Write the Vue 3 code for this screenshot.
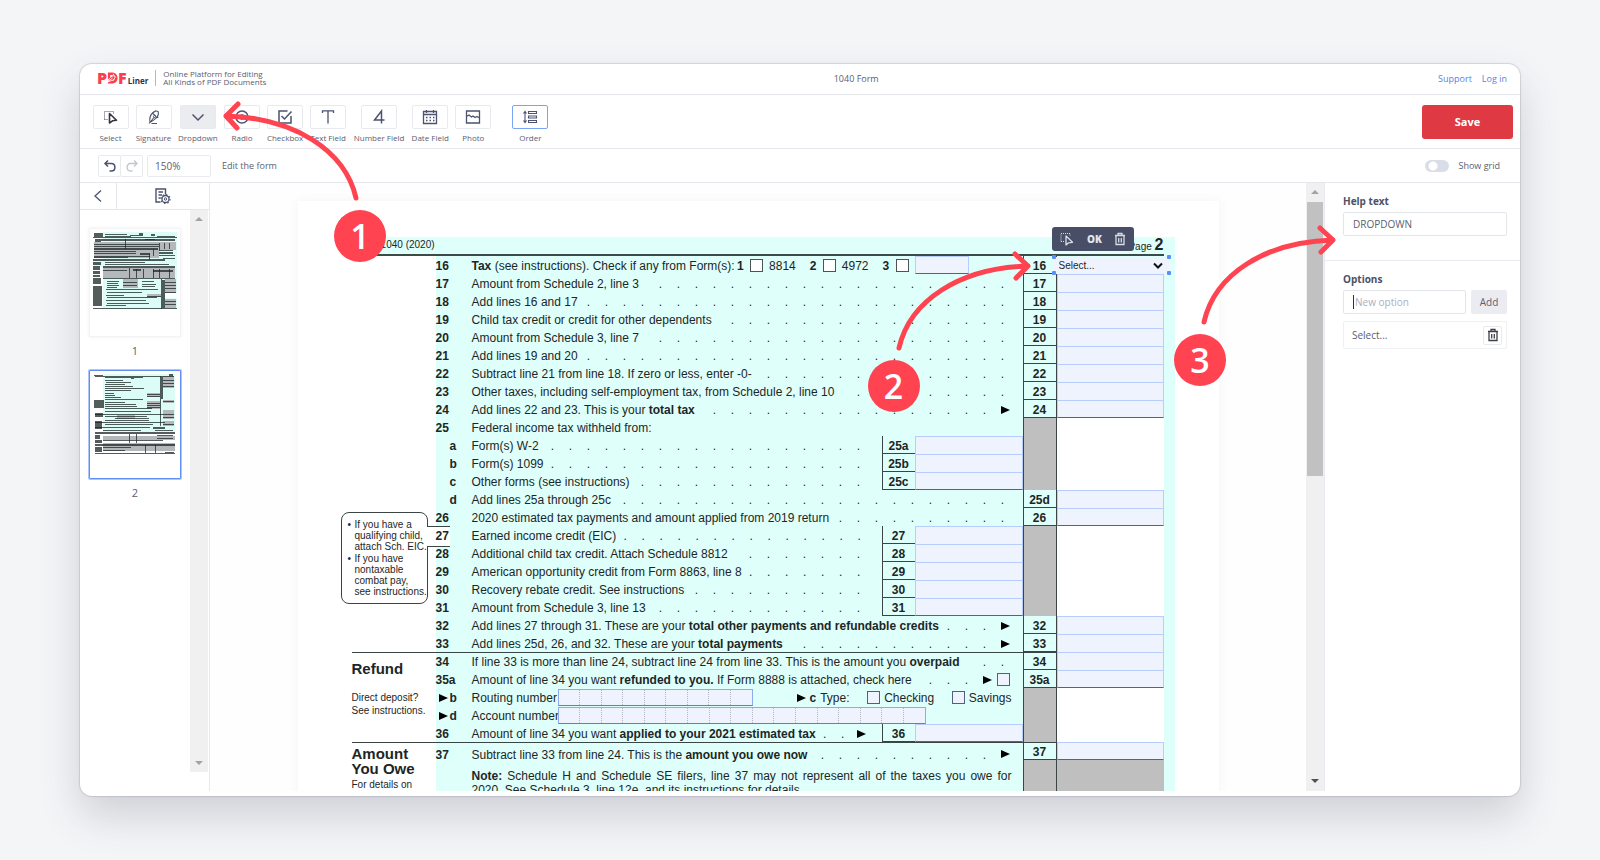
<script setup>
import { ref } from 'vue'

const tools = [
  { id: 'select', label: 'Select' },
  { id: 'sign', label: 'Signature' },
  { id: 'drop', label: 'Dropdown' },
  { id: 'radio', label: 'Radio' },
  { id: 'check', label: 'Checkbox' },
  { id: 'text', label: 'Text Field' },
  { id: 'number', label: 'Number Field' },
  { id: 'date', label: 'Date Field' },
  { id: 'photo', label: 'Photo' },
  { id: 'order', label: 'Order' },
]

const zoom = ref('150%')
const showGrid = ref(false)
const helpText = ref('DROPDOWN')
const newOption = ref('')

// Row text: plain parts at even positions, bold parts at odd positions.
const groups = [
  {
    id: 'payments',
    rows: [
      { no: '16', kind: 'tax', box: '16' },
      { no: '17', text: ['Amount from Schedule 2, line 3'], dots: 20, box: '17' },
      { no: '18', text: ['Add lines 16 and 17'], dots: 24, box: '18' },
      { no: '19', text: ['Child tax credit or credit for other dependents'], dots: 16, box: '19' },
      { no: '20', text: ['Amount from Schedule 3, line 7'], dots: 20, box: '20' },
      { no: '21', text: ['Add lines 19 and 20'], dots: 24, box: '21' },
      { no: '22', text: ['Subtract line 21 from line 18. If zero or less, enter -0-'], dots: 14, box: '22' },
      { no: '23', text: ['Other taxes, including self-employment tax, from Schedule 2, line 10'], dots: 9, box: '23' },
      { no: '24', text: ['Add lines 22 and 23. This is your ', 'total tax'], dots: 16, arrow: true, box: '24', last: true },
      { no: '25', text: ['Federal income tax withheld from:'] },
      { no: 'a', sub: true, text: ['Form(s) W-2'], dots: 18, mini: '25a' },
      { no: 'b', sub: true, text: ['Form(s) 1099'], dots: 18, mini: '25b' },
      { no: 'c', sub: true, text: ['Other forms (see instructions)'], dots: 13, mini: '25c', last: true },
      { no: 'd', sub: true, text: ['Add lines 25a through 25c'], dots: 22, box: '25d' },
      { no: '26', text: ['2020 estimated tax payments and amount applied from 2019 return'], dots: 10, box: '26', last: true },
      { no: '27', notch: true, text: ['Earned income credit (EIC)'], dots: 14, mini: '27' },
      { no: '28', text: ['Additional child tax credit. Attach Schedule 8812'], dots: 7, mini: '28' },
      { no: '29', text: ['American opportunity credit from Form 8863, line 8'], dots: 7, mini: '29' },
      { no: '30', text: ['Recovery rebate credit. See instructions'], dots: 10, mini: '30' },
      { no: '31', text: ['Amount from Schedule 3, line 13'], dots: 12, mini: '31', last: true },
      { no: '32', text: ['Add lines 27 through 31. These are your ', 'total other payments and refundable credits'], dots: 3, arrow: true, box: '32' },
      { no: '33', text: ['Add lines 25d, 26, and 32. These are your ', 'total payments'], dots: 11, arrow: true, box: '33' },
    ],
  },
  {
    id: 'refund',
    rows: [
      { no: '34', text: ['If line 33 is more than line 24, subtract line 24 from line 33. This is the amount you ', 'overpaid'], dots: 2, box: '34' },
      { no: '35a', text: ['Amount of line 34 you want ', 'refunded to you.', ' If Form 8888 is attached, check here'], dots: 3, arrow: true, check: true, box: '35a', last: true },
      { no: 'b', sub: true, point: true, kind: 'routing' },
      { no: 'd', sub: true, point: true, kind: 'account' },
      { no: '36', text: ['Amount of line 34 you want ', 'applied to your 2021 estimated tax'], dots: 2, arrow: true, mini: '36', last: true },
    ],
  },
  {
    id: 'owe',
    rows: [
      { no: '37', text: ['Subtract line 33 from line 24. This is the ', 'amount you owe now'], dots: 10, arrow: true, box: '37', last: true },
      { no: '', kind: 'note', dark: true },
    ],
  },
]

// Thumbnail drawings: [x, y, width, height] per tone.
const thumbs = [
  {
    page: 1,
    mint: [[10, 0, 74, 61], [0, 27, 10, 8], [10, 61, 62, 16], [72, 66, 12, 11]],
    grey: [[1, 10, 65, 16], [66, 10, 17, 8], [10, 36, 72, 10], [30, 47, 15, 9], [72, 47, 11, 14], [72, 67, 11, 9], [54, 62, 14, 3]],
    ink: [
      [1, 1, 9, 4], [12, 2, 22, 1], [12, 4, 26, 1], [37, 3, 9, 1], [46, 1, 4, 3], [58, 2, 4, 2], [0, 5, 84, 1], [64, 4, 18, 1],
      [2, 7, 80, 2], [2, 9, 6, 1], [32, 7, 1, 10], [52, 7, 10, 1], [1, 12, 65, 1], [1, 14, 65, 1], [1, 16, 64, 2], [66, 11, 1, 8], [71, 11, 1, 6], [76, 11, 1, 6],
      [1, 19, 42, 1], [1, 21, 42, 1], [47, 21, 10, 2], [1, 24, 34, 2], [60, 17, 1, 7], [35, 24, 22, 1], [66, 18, 14, 1], [66, 20, 14, 2], [66, 23, 16, 1], [56, 22, 1, 6],
      [0, 27, 72, 2], [70, 26, 12, 1], [0, 30, 8, 3], [12, 30, 40, 1], [12, 32, 64, 1], [0, 34, 7, 4], [10, 34, 72, 2], [0, 39, 7, 3],
      [10, 38, 24, 1], [40, 37, 8, 2], [60, 38, 20, 2], [36, 36, 1, 10], [43, 37, 1, 9], [50, 37, 1, 9], [60, 37, 1, 9], [66, 37, 1, 9], [76, 37, 1, 9],
      [0, 43, 7, 2], [0, 46, 8, 6], [10, 46, 72, 1], [0, 54, 9, 20], [14, 49, 12, 1], [14, 51, 11, 1], [14, 53, 12, 1], [14, 55, 10, 1], [30, 50, 14, 1], [30, 53, 14, 1],
      [49, 49, 12, 1], [49, 52, 14, 1], [49, 54, 13, 1], [13, 57, 52, 1], [14, 60, 35, 1], [13, 63, 18, 1], [14, 65, 50, 1], [13, 68, 40, 1], [14, 71, 42, 1], [13, 73, 20, 1],
      [54, 64, 14, 1], [68, 47, 1, 30], [69, 48, 3, 28], [72, 50, 11, 1], [72, 53, 11, 1], [72, 56, 11, 1], [72, 60, 11, 1], [72, 69, 11, 1], [72, 72, 11, 1], [0, 76, 84, 1],
    ],
  },
  {
    page: 2,
    mint: [[10, 0, 72, 58]],
    grey: [[70, 2, 11, 12], [54, 19, 13, 4], [54, 27, 13, 8], [70, 26, 11, 3], [70, 36, 11, 9], [70, 47, 11, 5], [24, 41, 18, 4], [10, 62, 72, 4], [10, 69, 72, 8]],
    ink: [
      [1, 1, 9, 1], [76, 0, 4, 2], [2, 2, 79, 1], [12, 3, 38, 1], [38, 4, 3, 1], [12, 6, 18, 1], [13, 8, 25, 1], [12, 10, 20, 1], [12, 12, 28, 1],
      [12, 14, 39, 1], [12, 16, 26, 1], [12, 19, 9, 1], [12, 21, 10, 1], [12, 23, 16, 1], [12, 25, 38, 1], [12, 28, 20, 1], [12, 30, 31, 1],
      [12, 32, 32, 1], [12, 34, 47, 1], [12, 37, 46, 1], [2, 40, 68, 1], [12, 42, 42, 1], [22, 44, 34, 1], [12, 46, 44, 1], [2, 48, 70, 1],
      [12, 50, 48, 1], [1, 26, 10, 8], [2, 39, 8, 4], [2, 47, 7, 8], [54, 20, 13, 1], [54, 22, 13, 1], [54, 29, 13, 1], [54, 31, 13, 1], [54, 33, 13, 1],
      [67, 2, 1, 50], [68, 3, 2, 22], [70, 6, 11, 1], [70, 9, 11, 1], [70, 12, 11, 1], [70, 27, 11, 1], [70, 40, 11, 1], [70, 43, 11, 1], [70, 50, 11, 1],
      [2, 53, 55, 1], [60, 53, 12, 2], [10, 56, 38, 1], [62, 56, 18, 1], [2, 58, 80, 2], [2, 61, 5, 4], [2, 66, 7, 3], [36, 60, 1, 9], [43, 60, 1, 9], [10, 66, 60, 1],
      [64, 61, 16, 1], [64, 64, 16, 1], [2, 70, 80, 2], [2, 73, 7, 5], [10, 73, 28, 1], [10, 76, 22, 1], [52, 71, 1, 8], [62, 71, 1, 8], [2, 79, 80, 1], [72, 78, 9, 1],
    ],
  },
]
</script>

<template>
  <div class="page">
    <main class="window">
      <header class="brand-bar">
        <a class="logo" href="#" aria-label="PDFLiner">
          <span class="logo-pdf">P</span>
          <svg class="logo-d" viewBox="0 0 12 12" aria-hidden="true">
            <path d="M1 0H5C9 0 11.500 2.400 11.500 6S9 12 5 12H1V10.500L5 9.400C7.500 9.200 8.500 8 8.500 6S7.300 2.800 5 2.700H3.500V5.500L1 7.500Z" />
            <path d="M1.500 9.500C2.500 7 4 4.800 7 3.800L8.200 5.500C7.500 7.800 5 8.800 1.500 9.500Z" />
            <path class="cut" d="M1.500 9.600 6 6M6.500 1.500 9.500 5.500" />
          </svg>
          <span class="logo-pdf">F</span>
          <span class="logo-liner">Liner</span>
        </a>
        <p class="tagline">Online Platform for Editing<br />All Kinds of PDF Documents</p>
        <h1 class="doc-title">1040 Form</h1>
        <nav class="links">
          <a href="#">Support</a>
          <a href="#">Log in</a>
        </nav>
      </header>

      <section class="tool-bar">
        <div v-for="t in tools" :key="t.id" class="tool" :class="t.id">
          <button :id="'tool-' + t.id" class="tool-btn" type="button" :aria-labelledby="'label-' + t.id">
            <svg v-if="t.id === 'select'" width="16" height="16" viewBox="0 0 16 16">
              <path d="M1.500 10.500V2.500H10.500V5M1.500 10.500H5" stroke-dasharray="1 1" stroke-width="1" />
              <path d="M6.500 4.500V14L9.500 11.800 13.500 11.300Z" stroke="#33353f" stroke-width="1.600" stroke-linejoin="round" />
            </svg>
            <svg v-else-if="t.id === 'sign'" width="16" height="16" viewBox="0 0 16 16">
              <path d="M3 14.500 8 8.500M4 13.300C3.400 10 4 6.500 6.500 4L10 7.500M6.500 4C8 2.300 10 1.500 12 2.500 13 4.500 12 7 10 9 8 11.500 6 12.300 4 13.300M6.500 4 10 1.800M10 9 12.500 8M5.500 14.500H11" stroke-width="1.100" />
              <circle cx="8.500" cy="7.500" r="1" stroke-width="1" />
            </svg>
            <svg v-else-if="t.id === 'drop'" width="16" height="16" viewBox="0 0 16 16"><path d="M2.500 5.500 8 11 13.500 5.500" stroke-width="1.500" /></svg>
            <svg v-else-if="t.id === 'radio'" width="16" height="16" viewBox="0 0 16 16"><circle cx="8" cy="8" r="6" stroke-width="1.500" /><circle cx="8" cy="8" r="2" stroke-width="1.500" /></svg>
            <svg v-else-if="t.id === 'check'" width="16" height="16" viewBox="0 0 16 16"><path d="M10.500 2H2V14H14V7M4.500 7 7.500 10 14.500 2.500" stroke-width="1.500" /></svg>
            <svg v-else-if="t.id === 'text'" width="16" height="16" viewBox="0 0 16 16"><path d="M2.500 4V1.800H13.500V4M8 1.800V14.500" stroke-width="1.300" /></svg>
            <svg v-else-if="t.id === 'number'" width="16" height="16" viewBox="0 0 16 16"><path d="M10.500 14.500V2L3.500 11H13.500" stroke-width="1.500" /></svg>
            <svg v-else-if="t.id === 'date'" width="16" height="16" viewBox="0 0 16 16"><path d="M1.500 2.500H14.500V14.500H1.500ZM1.500 5.500H14.500M4.500 1V4M11.500 1V4" stroke-width="1.300" /><path d="M4 8.500H13M4 11.500H13" stroke-width="1.500" stroke-dasharray="1.500 2" /></svg>
            <svg v-else-if="t.id === 'photo'" width="16" height="16" viewBox="0 0 16 16"><path d="M1.500 2H14.500V14H1.500ZM1.500 7.500 4 6 6.500 8 8 7 10 8.500 12 7.500 14.500 9" stroke-width="1.300" /></svg>
            <svg v-else width="16" height="16" viewBox="0 0 16 16"><path d="M3 3V13M1.500 4.500 3 2.500 4.500 4.500M1.500 11.500 3 13.500 4.500 11.500M6.500 2.500H14.500V4.500H6.500ZM6.500 7H14.500V9H6.500ZM6.500 11.500H14.500V13.500H6.500Z" stroke-width="1.100" /></svg>
          </button>
          <label :id="'label-' + t.id" :for="'tool-' + t.id">{{ t.label }}</label>
        </div>
        <button class="save" type="button">Save</button>
      </section>

      <section class="sub-bar">
        <div class="history">
          <button type="button" aria-label="Undo">
            <svg width="14" height="14" viewBox="0 0 14 14"><path d="M5 1.500 2 4.500 5 7.500M2 4.500H8.500C13 4.500 13 12 8.500 12H6.500" stroke-width="1.500" /></svg>
          </button>
          <button type="button" aria-label="Redo" disabled>
            <svg width="14" height="14" viewBox="0 0 14 14"><path d="M9 1.500 12 4.500 9 7.500M12 4.500H5.500C1 4.500 1 12 5.500 12H7.500" stroke-width="1.300" /></svg>
          </button>
        </div>
        <input v-model="zoom" class="zoom" type="text" aria-label="Zoom" />
        <span class="hint">Edit the form</span>
        <label class="grid-switch"><input v-model="showGrid" type="checkbox" />Show grid</label>
      </section>

      <section class="workspace">
        <aside class="pages">
          <div class="pages-head">
            <button class="back" type="button" aria-label="Back">
              <svg width="10" height="14" viewBox="0 0 10 14"><path d="M8 1.500 2 7 8 12.500" stroke-width="1.300" /></svg>
            </button>
            <button class="setup" type="button" aria-label="Page settings">
              <svg width="18" height="18" viewBox="0 0 18 18">
                <path d="M6.500 15H2V2H11.500V7.500M4.500 5H9M4.500 8H8M4.500 11H6.500" stroke-width="1.400" />
                <circle cx="11.500" cy="12" r="3.500" stroke-width="1.300" /><circle cx="11.500" cy="12" r="1.200" stroke-width="1" />
                <circle cx="11.500" cy="12" r="4.500" stroke-width="1.200" stroke-dasharray="1.500 2" />
              </svg>
            </button>
          </div>
          <div class="pages-list">
            <div class="thumbs">
              <figure v-for="p in thumbs" :key="p.page">
                <button class="thumb" :class="{ current: p.page === 2 }" type="button" :aria-label="'Page ' + p.page">
                  <svg viewBox="0 0 84 80" aria-hidden="true">
                    <rect v-for="(r, i) in p.mint" :key="'m' + i" :x="r[0]" :y="r[1]" :width="r[2]" :height="r[3]" fill="#dcfdf7" />
                    <rect v-for="(r, i) in p.grey" :key="'g' + i" :x="r[0]" :y="r[1]" :width="r[2]" :height="r[3]" fill="#b4b8ba" />
                    <rect v-for="(r, i) in p.ink" :key="'k' + i" :x="r[0]" :y="r[1]" :width="r[2]" :height="r[3]" fill="#1c2626" fill-opacity="0.75" />
                  </svg>
                </button>
                <figcaption>{{ p.page }}</figcaption>
              </figure>
            </div>
            <div class="scroll"><i class="up"></i><i class="down"></i></div>
          </div>
        </aside>

        <div class="canvas">
          <article class="sheet">
            <header class="form-head">
              <span>Form 1040 (2020)</span>
              <span>Page <b>2</b></span>
            </header>

            <section v-for="g in groups" :key="g.id" class="group" :class="g.id">
              <div class="margin">
                <ul v-if="g.id === 'payments'" class="notes">
                  <li>If you have a<br />qualifying child,<br />attach Sch. EIC.</li>
                  <li>If you have<br />nontaxable<br />combat pay,<br />see instructions.</li>
                </ul>
                <template v-else-if="g.id === 'refund'">
                  <h2>Refund</h2>
                  <p>Direct deposit?<br />See instructions.</p>
                </template>
                <template v-else>
                  <h2>Amount You Owe</h2>
                  <p>For details on</p>
                </template>
              </div>

              <div class="rows">
                <div v-for="r in g.rows" :key="r.no" class="row" :class="[r.kind, { last: r.last, dark: r.dark }]">
                  <div class="no" :class="{ sub: r.sub, notch: r.notch }"><i v-if="r.point" class="tri"></i><b>{{ r.no }}</b></div>

                  <div class="main" :class="{ split: r.mini }">
                    <template v-if="r.kind === 'tax'">
                      <span><b>Tax</b> (see instructions). Check if any from Form(s):</span>
                      <label class="form-no"><b>1</b><input type="checkbox" />8814</label>
                      <label class="form-no"><b>2</b><input type="checkbox" />4972</label>
                      <label class="form-no"><b>3</b><input type="checkbox" /></label>
                      <input class="field other" type="text" aria-label="Other form" />
                    </template>
                    <template v-else-if="r.kind === 'routing'">
                      <label class="comb-label" for="routing">Routing number</label>
                      <span class="comb nine"><i v-for="n in 9" :key="n"></i><input id="routing" type="text" /></span>
                      <span class="type"><i class="tri"></i><b>c</b> Type:</span>
                      <label class="kind-box"><input type="checkbox" />Checking</label>
                      <label class="kind-box"><input type="checkbox" />Savings</label>
                    </template>
                    <template v-else-if="r.kind === 'account'">
                      <label class="comb-label" for="account">Account number</label>
                      <span class="comb seventeen"><i v-for="n in 17" :key="n"></i><input id="account" type="text" /></span>
                    </template>
                    <p v-else-if="r.kind === 'note'" class="note-text">
                      <b>Note:</b> Schedule H and Schedule SE filers, line 37 may not represent all of the taxes you owe for 2020. See Schedule 3, line 12e, and its instructions for details.
                    </p>
                    <template v-else>
                      <span class="text"><component :is="i % 2 ? 'b' : 'span'" v-for="(t, i) in r.text" :key="i">{{ t }}</component></span>
                      <span class="dots" aria-hidden="true"><i v-for="n in r.dots || 0" :key="n">.</i></span>
                      <span v-if="r.arrow" class="arrow"><i class="tri"></i></span>
                      <input v-if="r.check" type="checkbox" class="here" aria-label="Form 8888 attached" />
                    </template>
                  </div>

                  <template v-if="r.mini">
                    <div class="mini-no">{{ r.mini }}</div>
                    <input class="field" type="text" :aria-label="'Line ' + r.mini" />
                  </template>

                  <div class="box-no" :class="{ grey: !r.box }">{{ r.box }}</div>
                  <input v-if="r.box && r.kind !== 'tax'" class="field value" type="text" :aria-label="'Line ' + r.box" />
                  <div v-else-if="r.kind === 'tax'" class="value picked">
                    <select aria-label="Line 16"><option>Select...</option></select>
                    <svg class="chev" width="10" height="8" viewBox="0 0 10 8"><path d="M1 1.500 5 5.500 9 1.500" stroke-width="2" /></svg>
                    <i class="knob a"></i><i class="knob b"></i><i class="knob c"></i><i class="knob d"></i>
                    <div class="popup">
                      <button type="button" aria-label="Select">
                        <svg width="16" height="16" viewBox="0 0 16 16">
                          <path d="M2 10.500V2.500H11V5M2 10.500H5" stroke-dasharray="1 1" stroke-width="1" />
                          <path d="M7 5V14L9.500 11.800 13.500 11.300Z" stroke-width="1.300" stroke-linejoin="round" />
                        </svg>
                      </button>
                      <button type="button">OK</button>
                      <button type="button" aria-label="Delete">
                        <svg width="12" height="14" viewBox="0 0 12 14"><path d="M1 3.500H11M4 3V1.500H8V3M2 4V12.500H10V4M4.700 6V10.500M7.300 6V10.500" stroke-width="1.300" /></svg>
                      </button>
                    </div>
                  </div>
                  <div v-else class="value blank"></div>
                </div>
              </div>
            </section>

            <div class="callout two">
              <svg width="140" height="106" viewBox="0 0 140 106"><path d="M7 100C18 52 68 20 136 18M123 6 136 18 124 30" /></svg>
              <span>2</span>
            </div>
          </article>
        </div>
        <div class="scroll main-scroll"><i class="up"></i><div class="bar"></div><i class="down"></i></div>

        <aside class="props">
          <div class="prop-block">
            <label for="help">Help text</label>
            <input id="help" v-model="helpText" type="text" />
          </div>
          <div class="prop-block">
            <label for="option">Options</label>
            <div class="add-row">
              <div class="caret-box"><input id="option" v-model="newOption" type="text" placeholder="New option" /></div>
              <button class="add" type="button">Add</button>
            </div>
            <div class="option">
              <span>Select...</span>
              <button type="button" aria-label="Delete option">
                <svg width="12" height="14" viewBox="0 0 12 14"><path d="M1 3.500H11M4 3V1.500H8V3M2 4V12.500H10V4M4.700 6V10.500M7.300 6V10.500" stroke-width="1.300" /></svg>
              </button>
            </div>
          </div>
        </aside>
      </section>

      <div class="callout one">
        <svg width="144" height="106" viewBox="0 0 144 106"><path d="M137 99C126 51 75 19 7 17M19 5 7 17 18 29" /></svg>
        <span>1</span>
      </div>
      <div class="callout three">
        <svg width="140" height="106" viewBox="0 0 140 106"><path d="M7 100C18 52 68 20 136 18M123 6 136 18 124 30" /></svg>
        <span>3</span>
      </div>
    </main>
  </div>
</template>

<style>
html,
body {
  background: #f4f5f7;
}
</style>

<style scoped>
* {
  box-sizing: border-box;
}
.page {
  height: 100vh;
  min-height: 600px;
  padding: 64px 80px;
  background: #f4f5f7;
  font-family: 'Open Sans', sans-serif;
  font-size: 9px;
  color: #5a6072;
}
button,
input,
select {
  margin: 0;
  padding: 0;
  font: inherit;
  color: inherit;
}
button {
  display: flex;
  align-items: center;
  justify-content: center;
  background: #fff;
  border: 1px solid #e9eaef;
}
svg {
  display: block;
  fill: none;
  stroke: #4c5270;
}
h1,
h2,
p,
ul,
figure {
  margin: 0;
  padding: 0;
}
a {
  text-decoration: none;
}
.window {
  position: relative;
  display: flex;
  flex-direction: column;
  height: 100%;
  padding-bottom: 5px;
  background: #fff;
  border-radius: 12px;
  box-shadow: 0 0 1px 1px rgba(120, 125, 140, 0.25), 0 20px 40px rgba(60, 65, 85, 0.2);
}

/* brand bar */
.brand-bar {
  display: flex;
  align-items: center;
  height: 31px;
  padding: 0 13px 2px 17px;
  border-bottom: 1px solid #e6e7ed;
}
.logo {
  display: flex;
  align-items: baseline;
}
.logo-pdf {
  font-size: 16px;
  line-height: 16px;
  font-weight: 800;
  color: #fb3d4e;
}
.logo-d {
  width: 11px;
  height: 12px;
  fill: #fb3d4e;
  stroke: none;
}
.logo-d .cut {
  fill: none;
  stroke: #fff;
  stroke-width: 1;
}
.logo-liner {
  margin-left: 1px;
  font-size: 8px;
  font-weight: 700;
  color: #2c3152;
}
.tagline {
  margin-left: 7px;
  padding-left: 7px;
  border-left: 1px solid #b5b8c2;
  font-size: 8px;
  line-height: 8px;
}
.doc-title {
  flex: 1;
  padding-left: 8px;
  font-size: 9px;
  font-weight: 400;
  text-align: center;
}
.links {
  display: flex;
  gap: 10px;
}
.links a {
  color: #5b7fe0;
}

/* tool bar */
.tool-bar {
  display: flex;
  align-items: flex-start;
  gap: 6px;
  height: 54px;
  padding: 10px 7px 0 12px;
  border-bottom: 1px solid #e6e7ed;
}
.tool {
  display: flex;
  flex-direction: column;
  align-items: center;
  gap: 3px;
  min-width: 37px;
}
.tool.number {
  min-width: 53px;
}
.tool label {
  font-size: 8px;
  line-height: 12px;
  white-space: nowrap;
}
.tool-btn {
  width: 36px;
  height: 24px;
  border-radius: 2px;
}
.drop .tool-btn {
  background: #ebecf0;
}
.order {
  margin-left: 14px;
}
.order .tool-btn {
  border-color: #7ba3f7;
}
.save {
  width: 91px;
  height: 34px;
  margin-left: auto;
  padding-bottom: 1px;
  border: 0;
  border-radius: 3px;
  background: #df3944;
  color: #fff;
  font-size: 11px;
  font-weight: 700;
}

/* sub bar */
.sub-bar {
  display: flex;
  align-items: center;
  height: 34px;
  padding: 0 20px 0 18px;
  border-bottom: 1px solid #e6e7ed;
}
.history {
  display: flex;
}
.history button {
  width: 23px;
  height: 22px;
  border-radius: 2px;
}
.history button + button {
  margin-left: -1px;
}
.history button:disabled svg {
  stroke: #c3c6d0;
}
.zoom {
  width: 64px;
  height: 22px;
  margin-left: 4px;
  padding-left: 7px;
  border: 1px solid #e9eaef;
  border-radius: 2px;
  font-size: 10px;
}
.hint {
  margin-left: 11px;
}
.grid-switch {
  display: flex;
  align-items: center;
  gap: 9px;
  margin-left: auto;
}
.grid-switch input {
  appearance: none;
  width: 24px;
  height: 12px;
  border-radius: 6px;
  background: radial-gradient(circle at 8px 6px, #fff 4px, #d9dde8 5px);
}

/* page list */
.workspace {
  display: flex;
  flex: 1;
  min-height: 0;
}
.pages {
  display: flex;
  flex-direction: column;
  width: 130px;
  flex: none;
  padding-bottom: 19px;
  border-right: 1px solid #e9eaef;
}
.pages-head {
  display: flex;
  height: 27px;
  border-bottom: 1px solid #e6e7ed;
}
.pages-head button {
  border: 0;
}
.pages-head .back {
  width: 37px;
  border-right: 1px solid #e6e7ed;
}
.pages-head .setup {
  flex: 1;
}
.pages-list {
  display: flex;
  flex: 1;
  min-height: 0;
  padding-right: 1px;
}
.thumbs {
  flex: 1;
  padding: 18px 9px 0;
}
.thumbs figcaption {
  height: 33px;
  font-size: 11px;
  line-height: 28px;
  text-align: center;
}
.thumb {
  align-items: flex-start;
  width: 100%;
  height: 109px;
  padding: 3px 0;
  border: 1px solid #f3f3f6;
  box-shadow: 0 0 3px rgba(60, 60, 80, 0.08);
}
.thumb svg {
  width: 84px;
  height: 80px;
  stroke: none;
}
.thumb.current {
  border: 1px solid #5e8ff5;
  border-radius: 1px;
  box-shadow: 0 0 0 1px rgba(94, 143, 245, 0.5);
}
.scroll {
  display: flex;
  flex-direction: column;
  align-items: center;
  flex: none;
  width: 18px;
  padding: 7px 0;
  background: #f0f0f0;
}
.scroll .down {
  margin-top: auto;
}
.up,
.down {
  width: 0;
  border: 4px solid transparent;
}
.up {
  border-top: 0;
  border-bottom: 4px solid #a3a3a3;
}
.down {
  border-bottom: 0;
  border-top: 4px solid #a3a3a3;
}
.main-scroll {
  padding: 7px 0 8px;
}
.main-scroll .bar {
  width: 16px;
  height: 274px;
  margin-top: 8px;
  background: #c1c1c1;
}
.main-scroll .down {
  border-top-color: #505050;
}

/* sheet */
.canvas {
  flex: 1;
  min-width: 0;
  padding-top: 18px;
  overflow: hidden;
  background: #fefefe;
}
.sheet {
  position: relative;
  width: 921px;
  margin: 0 auto;
  padding: 36px 44px 0 54px;
  background: #fff;
  box-shadow: 0 0 10px rgba(50, 60, 100, 0.06);
  font-family: 'Liberation Sans', Arial, sans-serif;
  font-size: 12px;
  line-height: 18px;
  color: #1d2626;
}
.form-head {
  display: flex;
  justify-content: space-between;
  height: 19px;
  padding: 0 11px 0 3px;
  font-size: 10px;
  line-height: 16px;
  background: linear-gradient(#3c4a48, #3c4a48) left bottom / calc(100% - 11px) 2px no-repeat, #dffffa;
}
.form-head b {
  font-size: 16px;
}
.group {
  display: flex;
}
.margin {
  width: 84px;
  flex: none;
}
.refund .margin,
.owe .margin,
.refund .row:first-child > :nth-child(-n + 3),
.owe .row:first-child > :nth-child(-n + 3) {
  box-shadow: inset 0 1px #3b4545;
}
.rows {
  flex: 1;
  min-width: 0;
  padding-right: 11px;
  background: #dffffa;
}
.row {
  display: flex;
  height: 18px;
}
.no {
  position: relative;
  width: 36px;
  flex: none;
  padding-top: 1px;
}
.no.sub {
  padding-left: 14px;
}
.no .tri {
  position: absolute;
  left: 3px;
  top: 6px;
}
.notch::before {
  content: '';
  position: absolute;
  top: 0;
  left: -9px;
  width: 23px;
  height: 19px;
  background: #fff;
  border: 1px solid #3b4545;
  border-width: 1px 0;
}
.notch b {
  position: relative;
}
.tri {
  display: block;
  border: 4px solid transparent;
  border-left: 9px solid #000;
  border-right: 0;
}
.main {
  display: flex;
  flex: 1;
  min-width: 0;
  padding: 1px 11px 0 0;
  white-space: nowrap;
}
.main.split {
  padding-right: 14px;
}
.text {
  white-space: pre;
}
.dots {
  display: flex;
  margin-left: auto;
}
.dots i {
  width: 18px;
  font-style: normal;
  text-align: center;
}
.arrow {
  display: flex;
  align-items: center;
  justify-content: flex-end;
  width: 18px;
  padding-right: 2px;
}
.main input[type='checkbox'] {
  appearance: none;
  width: 13px;
  height: 13px;
  border: 1px solid #53607a;
  background: #eff3fe;
}
.main .here {
  margin: 2px 2px 0 3px;
}
.mini-no,
.box-no {
  flex: none;
  width: 34px;
  padding-top: 1px;
  border: 1px solid #3b4545;
  border-width: 0 1px 1px;
  font-weight: 700;
  text-align: center;
}
.mini-no {
  width: 33px;
  border-right: 0;
}
.box-no.grey {
  border-bottom: 0;
  background: #bfbfbf;
}
.field {
  width: 108px;
  flex: none;
  border: 1px solid #b7cdfb;
  border-bottom: 0;
  border-radius: 0;
  background: #eff3fe;
}
.value {
  width: 107px;
  flex: none;
}
.field.value {
  width: 107px;
}
.row.last .field {
  border-bottom: 1px solid #56637c;
}
.blank {
  background: #fff;
}
.dark {
  height: 50px;
}
.dark .blank {
  background: #bfbfbf;
}

/* line 16 */
.form-no {
  display: flex;
}
.row.tax .form-no {
  margin-left: 14px;
}
.row.tax .form-no:first-of-type {
  margin-left: auto;
}
.row.tax .form-no b {
  width: 13px;
}
.row.tax .form-no input {
  margin: 2px 6px 0 0;
  border-color: #4c5454;
  background: #fff;
}
.row.tax .main {
  padding-right: 54px;
}
.row.tax .other {
  width: 54px;
  height: 18px;
  margin-top: -1px;
  border-bottom: 1px solid #56637c;
}
.picked {
  position: relative;
}
.picked select {
  position: absolute;
  left: -3px;
  top: 1px;
  width: 115px;
  height: 17px;
  padding-left: 5px;
  appearance: none;
  border: 0;
  border-radius: 0;
  background: #eff3fe;
  font-size: 10px;
}
.chev {
  position: absolute;
  right: 1px;
  top: 6px;
  stroke: #111;
}
.knob {
  position: absolute;
  width: 4px;
  height: 4px;
  border-radius: 1px;
  background: #5b8ff7;
}
.knob.a,
.knob.b {
  top: -1px;
}
.knob.c,
.knob.d {
  top: 15px;
}
.knob.a,
.knob.c {
  left: -5px;
}
.knob.b,
.knob.d {
  right: -7px;
}
.popup {
  position: absolute;
  left: -5px;
  top: -29px;
  display: flex;
  align-items: center;
  justify-content: space-around;
  width: 82px;
  height: 24px;
  padding: 0 2px;
  border-radius: 3px;
  background: #474e66;
  font-family: 'Open Sans', sans-serif;
  font-size: 10px;
  font-weight: 800;
  color: #e3e5ec;
}
.popup button {
  border: 0;
  background: none;
}
.popup svg {
  stroke: #d9dce6;
}

/* account rows */
.comb-label {
  width: 86px;
}
.comb {
  position: relative;
  display: flex;
  flex: none;
  height: 17px;
  border: 1px solid #8eabf0;
  border-bottom-color: #6d7ea8;
  background: #eff3fe;
}
.comb i {
  flex: 1;
  border-right: 1px dotted #b3b7c4;
}
.comb i:last-of-type {
  border-right: 0;
}
.comb input {
  position: absolute;
  inset: 0;
  width: 100%;
  border: 0;
  background: none;
}
.nine {
  width: 195px;
}
.seventeen {
  width: 368px;
}
.type {
  display: flex;
  align-items: center;
  gap: 4px;
  margin-left: 44px;
}
.kind-box {
  display: flex;
  gap: 4px;
  margin-left: auto;
}
.kind-box input {
  margin-top: 2px;
}

/* left notes */
.notes {
  width: 87px;
  margin: 256px 0 0 -11px;
  padding: 6px 0 6px 13px;
  border: 1px solid #3b4545;
  border-radius: 8px;
  font-size: 10px;
  line-height: 11px;
  list-style: none;
  white-space: nowrap;
}
.notes li {
  position: relative;
}
.notes li::before {
  content: '•';
  position: absolute;
  left: -7px;
}
.notes li + li {
  margin-top: 1px;
}
.margin h2 {
  font-size: 15px;
  line-height: 15px;
}
.margin p {
  font-size: 10px;
  line-height: 13px;
}
.refund h2 {
  padding-top: 9px;
}
.refund p {
  padding-top: 15px;
}
.owe h2 {
  padding-top: 4px;
}
.owe .margin p {
  padding-top: 2px;
}
.owe .no,
.owe .text,
.owe .dots {
  line-height: 24px;
}
.owe .arrow {
  padding-top: 5px;
}
.note-text {
  width: 542px;
  padding-top: 8px;
  line-height: 14px;
  text-align: justify;
  white-space: normal;
}

/* properties */
.props {
  width: 196px;
  flex: none;
  border-left: 1px solid #e9eaef;
}
.prop-block {
  padding: 9px 13px 0 18px;
  font-size: 10px;
}
.prop-block:first-child {
  height: 78px;
  border-bottom: 1px solid #e9eaef;
}
.prop-block > label {
  display: block;
  height: 20px;
  line-height: 18px;
  font-weight: 700;
  color: #4c5166;
}
.prop-block input {
  width: 100%;
  height: 24px;
  padding: 0 9px;
  border: 1px solid #e4e6ec;
  border-radius: 2px;
}
.prop-block input::placeholder {
  color: #a9afc3;
  opacity: 1;
}
.add-row {
  display: flex;
  gap: 5px;
}
.caret-box {
  position: relative;
  flex: 1;
}
.caret-box input {
  display: block;
  padding-left: 11px;
}
.caret-box::after {
  content: '';
  position: absolute;
  left: 10px;
  top: 5px;
  width: 1px;
  height: 14px;
  background: #28304e;
}
.add {
  width: 36px;
  height: 24px;
  border: 0;
  border-radius: 2px;
  background: #ebecf1;
}
.option {
  display: flex;
  align-items: center;
  justify-content: space-between;
  height: 28px;
  margin-top: 7px;
  padding: 0 4px 0 8px;
  border: 1px solid #eff0f4;
  border-radius: 2px;
}
.option button {
  width: 19px;
  height: 19px;
  border-radius: 2px;
}
.option svg {
  stroke: #3c3f48;
}

/* callouts */
.callout {
  position: absolute;
  pointer-events: none;
}
.callout svg {
  stroke: #ff4351;
  stroke-width: 5;
  stroke-linecap: round;
  stroke-linejoin: round;
}
.callout span {
  position: absolute;
  width: 52px;
  height: 52px;
  border-radius: 50%;
  background: #ff4351;
  color: #fff;
  font-family: 'Open Sans', sans-serif;
  font-size: 34px;
  font-weight: 600;
  line-height: 52px;
  text-align: center;
}
.one {
  left: 139px;
  top: 35px;
}
.one span {
  left: 115px;
  top: 111px;
}
.two {
  left: 594px;
  top: 47px;
}
.two span {
  left: -24px;
  top: 112px;
}
.three {
  right: 183px;
  top: 158px;
}
.three span {
  left: -23px;
  top: 112px;
}
</style>
